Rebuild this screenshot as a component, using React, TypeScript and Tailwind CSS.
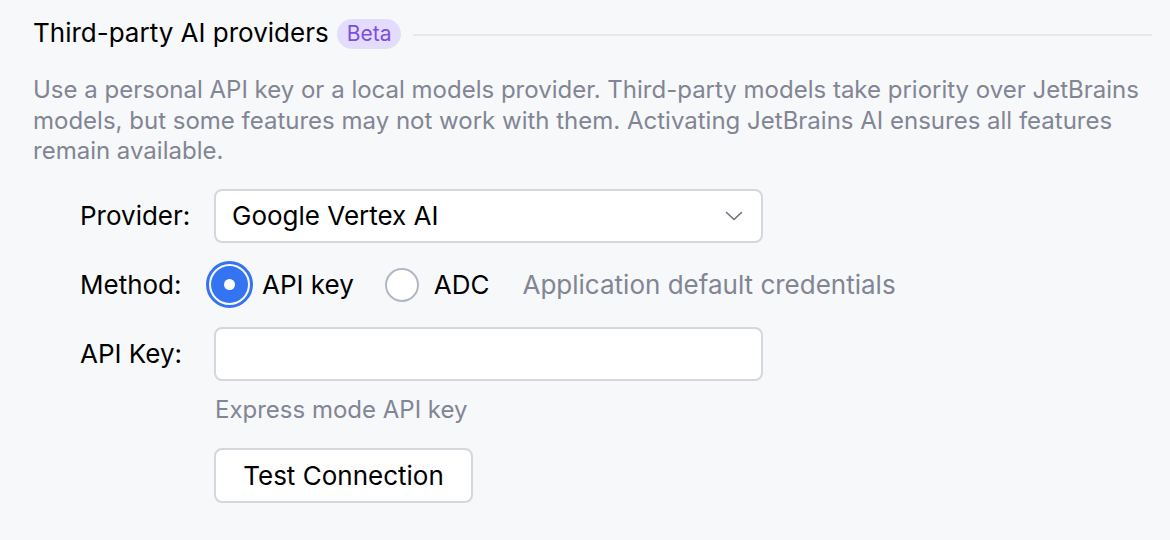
import { useState } from "react";

const App = () => {
  const [method, setMethod] = useState<string>("api");
  const [apiKey, setApiKey] = useState<string>("");

  return (
    <div
      className="w-[1170px] h-[540px] bg-[#f7f8fa] pl-[33px] pr-[18px] pt-[15px] text-[26px] text-[#000000] overflow-hidden"
      style={{ fontFamily: "Inter, 'Noto Sans', sans-serif" }}>
      {/* section header */}
      <div className="flex flex-row items-center h-[36px]">
        <span className="leading-[36px]">Third-party AI providers</span>
        <span className="ml-[8px] mt-[1px] h-[30px] px-[10px] rounded-full bg-[#e4dcfd] text-[#7d4fdc] text-[21px] leading-[30px]">
          Beta
        </span>
        <div className="flex-1 ml-[12px] mt-[4px] h-[2px] bg-[#e6e8ec]"></div>
      </div>

      <p className="mt-[24px] text-[24px] leading-[30.5px] text-[#818594] pr-[10px]">
        Use a personal API key or a local models provider. Third-party models take priority over JetBrains
        models, but some features may not work with them. Activating JetBrains AI ensures all features
        remain available.
      </p>

      <div className="ml-[47px] mt-[22px] flex flex-col">
        {/* provider */}
        <div className="flex flex-row items-center h-[54px]">
          <span className="w-[134px]">Provider:</span>
          <div className="w-[549px] h-[54px] bg-white border-2 border-[#d5d7dd] rounded-[8px] flex flex-row items-center pl-[16px] pr-[18px]">
            <span className="flex-1">Google Vertex AI</span>
            <svg width="18" height="10" viewBox="0 0 18 10" fill="none">
              <path d="M1.5 1.5 L9 8.5 L16.5 1.5" stroke="#6c707e" strokeWidth="1.6" strokeLinecap="round" strokeLinejoin="round" />
            </svg>
          </div>
        </div>

        {/* method */}
        <div className="flex flex-row items-center h-[48px] mt-[18px]">
          <span className="w-[126px]">Method:</span>
          <div onClick={() => setMethod("api")} className="flex flex-row items-center cursor-pointer">
            <div className="w-[47px] h-[47px] rounded-full border-[3px] border-[#3574f0] p-[2px]">
              <div className="w-full h-full rounded-full bg-[#3574f0] flex items-center justify-center">
                {method === "api" && <div className="w-[11px] h-[11px] rounded-full bg-white"></div>}
              </div>
            </div>
            <span className="ml-[9px]">API key</span>
          </div>
          <div onClick={() => setMethod("adc")} className="flex flex-row items-center ml-[31px] cursor-pointer">
            <div className="w-[34px] h-[34px] rounded-full border-2 border-[#b3b7c4] bg-white"></div>
            <span className="ml-[15px]">ADC</span>
          </div>
          <span className="ml-[33px] text-[#818594]">Application default credentials</span>
        </div>

        {/* api key */}
        <div className="flex flex-row items-center h-[54px] mt-[18px]">
          <span className="w-[134px]">API Key:</span>
          <input
            type="password"
            value={apiKey}
            onChange={(e) => setApiKey(e.target.value)}
            className="w-[549px] h-[54px] bg-white border-2 border-[#d5d7dd] rounded-[8px] px-[16px] outline-none"
          />
        </div>
        <span className="ml-[135px] mt-[14px] text-[24px] leading-[30px] text-[#818594]">Express mode API key</span>

        <button className="ml-[134px] mt-[23px] w-[259px] h-[55px] bg-white border-2 border-[#d5d7dd] rounded-[8px] text-[26px]">
          Test Connection
        </button>
      </div>
    </div>
  );
};

export default App;
